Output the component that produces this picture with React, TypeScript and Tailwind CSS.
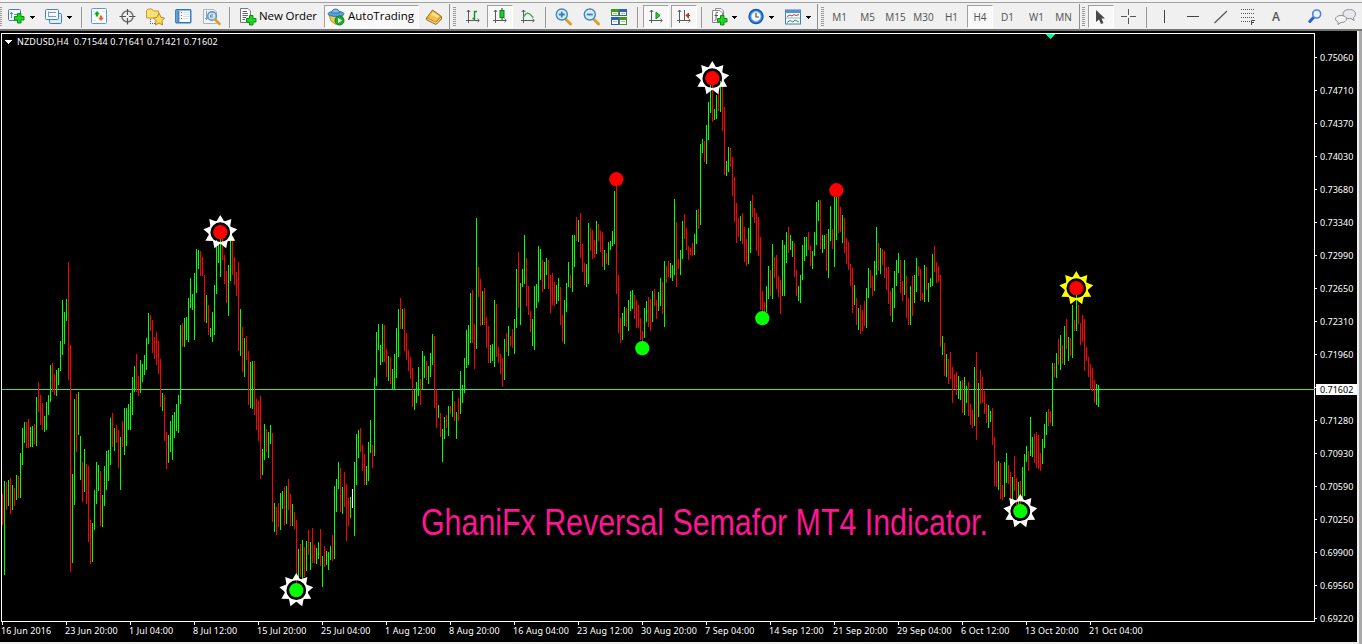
import type { ReactNode } from "react";

// One token per bar, oldest first: colour letter, high and low in chart pixels.
const BARS = `
r494-525 g481-575 r482-510 g480-506 r478-514 g485-510 r488-506 g475-500 r476-498 g453-498
g428-465 g422-443 r422-448 r419-448 g427-447 g426-447 r424-444 g397-446 r382-412 r395-425
r403-430 g416-432 g402-430 g395-415 g365-402 r363-392 r374-395 g370-396 g368-385 g341-371
g300-355 g312-344 g299-321 r262-380 r345-572 g474-563 g399-505 r394-452 g392-435 g436-480
r462-502 g449-492 r464-504 r466-542 r520-564 g523-562 g490-530 g462-504 g465-491 r471-526
g495-527 g466-506 g451-490 g450-481 g418-465 r413-447 g428-451 r425-443 r430-468 g437-490
r421-447 g408-455 g408-446 g404-430 g393-430 g377-415 g366-392 r354-392 r376-396 g360-393
g364-382 g355-375 g338-370 g313-344 r315-331 r320-353 r337-359 r332-365 r341-374 r359-407
g393-411 r395-441 r432-469 g435-463 g421-452 g415-460 g412-438 g404-431 g395-433 g325-404
r323-347 g318-347 g317-340 g298-342 g278-308 g294-310 g273-340 g249-293 g250-269 r251-276
r257-276 r275-322 g295-323 r305-335 g328-337 g312-342 g285-335 g240-294 g243-263 g239-277
r237-260 r255-284 r271-303 g265-316 g240-281 r240-275 r257-285 r272-296 r262-351 g309-356
r327-372 g338-377 r336-360 r351-405 g362-408 g361-409 r361-415 r399-430 r401-441 r396-479
g449-475 g424-460 r429-452 g432-458 g425-444 r433-522 g503-532 r507-535 r503-527 g493-530
g491-509 r487-525 g486-524 r479-510 r494-526 g504-526 r512-529 r520-583 g549-577 r544-577
g540-580 r547-577 g541-571 r530-555 g542-570 r528-563 r545-563 g548-564 g542-559 r529-566
g556-587 r546-567 g551-565 g552-570 g546-560 r535-561 g486-559 g479-512 g462-489 r468-512
g487-514 r472-507 r484-541 r498-526 g497-518 w489-508 g462-536 g434-485 g430-458 r428-452
r445-471 r454-485 g466-485 g442-481 g420-453 r445-468 g378-456 g332-386 g324-350 g345-365
g324-362 r325-362 r349-377 g356-381 r357-384 g369-389 g354-389 g328-378 g309-357 r298-329
g309-329 r308-351 r333-360 r350-371 r357-379 r368-407 g390-410 g382-403 g367-396 r379-405
g351-389 g356-378 r361-380 g366-384 g353-377 g334-365 r336-408 r389-428 g405-418 r413-437
g429-462 g417-439 r415-428 g406-436 r406-414 g391-417 r401-421 g412-439 r398-421 g371-414
g385-403 g358-393 g330-368 g325-365 g293-343 r290-343 r324-369 g218-349 r267-297 r279-326
g291-325 r288-325 r317-348 r326-363 g345-363 g344-361 g300-367 r304-357 r347-363 r354-374
r358-387 g339-380 r333-352 g326-356 r336-346 r329-348 g319-354 g269-328 r252-308 g283-325
g269-287 g235-284 r258-306 r286-315 r311-332 g319-346 g286-350 g284-308 g246-302 g249-280
r260-292 g262-289 g258-275 r260-289 r275-313 r273-305 r282-306 g285-304 g278-301 r287-325
r315-342 g300-344 g283-312 g262-287 r275-288 g235-292 g235-267 r217-241 g220-242 r213-258
r244-272 r263-285 g264-287 g223-284 r228-251 r230-259 r240-258 g221-254 r224-241 r231-252
r232-267 g250-270 r253-264 g242-265 g241-250 g231-246 g191-244 r183-294 r275-333 r318-343
g313-340 g307-326 r308-327 g300-331 g291-311 g290-309 r295-319 r300-328 r305-328 r318-340
r331-342 g308-338 g301-322 r297-327 r299-331 g291-322 r289-306 r300-319 g292-311 g278-306
r282-314 g261-327 r266-283 r261-277 g263-278 g265-281 g199-275 r222-287 r259-269 g250-275
g221-259 r214-239 r228-250 r246-260 r248-255 r243-256 g234-255 g210-244 r209-229 g144-225
g139-153 r141-162 g125-164 g102-140 g85-113 r83-122 g109-120 g95-119 r87-111 g81-112
r86-131 r107-175 g161-176 g147-172 r148-167 r157-196 r177-222 r203-243 r218-237 g216-241
r213-244 r227-262 r239-266 g228-264 g201-253 r195-217 r208-223 r213-251 r217-256 r237-310
r291-311 r302-312 g286-312 g266-299 r270-296 g244-299 r257-278 r255-289 r276-297 r280-314
g240-296 g245-296 g232-263 r227-253 g235-250 g241-257 r243-277 r270-296 g286-301 g275-303
g245-280 g237-261 g237-256 r232-250 r246-266 g251-269 g232-256 g202-245 g200-221 r200-249
g235-253 g235-249 r234-271 g229-278 g206-241 r229-249 g195-267 g195-240 r195-233 r207-232
g215-243 r218-253 r238-264 r242-270 r264-286 r268-313 g285-305 r298-325 g308-330 r305-334
r310-331 r301-326 g288-328 g268-298 r270-288 r276-296 g261-291 g227-275 r243-271 g248-274
r249-265 r251-278 r267-290 r267-304 r291-316 g288-322 g271-308 g260-286 g253-273 r260-293
r281-301 g260-295 r276-318 r298-325 g286-325 r276-316 g275-303 g258-292 r266-276 r269-301
r293-300 g265-302 r267-290 g283-302 g278-287 g254-286 r246-272 r262-283 r266-282 r275-347
g336-355 r343-376 g354-377 r359-384 r352-379 r367-403 r374-389 r372-395 g376-399 g381-400
r380-413 g377-415 g386-403 r382-416 r404-425 r410-428 g367-426 r352-440 g383-417 r370-404
r377-403 r391-414 r404-423 g405-428 g411-422 r408-445 r437-486 r462-487 g461-490 r463-499
r485-500 g462-497 g453-483 r465-484 r472-499 g477-500 r456-491 r478-505 g482-505 r481-505
g467-500 g454-496 g446-462 r451-471 g417-456 g437-457 r434-463 r432-468 r435-469 r453-471
g439-464 g424-448 g412-435 r409-426 r411-423 g363-426 r363-377 g353-378 r339-365 g335-370
r345-364 g326-365 r319-349 g337-361 r338-356 g305-358 r320-331 g295-331 r305-324 r323-345
r315-342 r319-371 r347-361 r357-377 r364-390 r368-391 r380-403 g384-405 g385-407
`
  .trim()
  .split(/\s+/)
  .map((token, i) => {
    const [high, low] = token.slice(1).split("-").map(Number);
    return { x: 2 + i * 2, high, low, kind: token[0] };
  });

const BAR_COLORS: Record<string, string> = { r: "#ff0000", g: "#00ff00", w: "#ffffff" };

const PRICES = [
  "0.75060", "0.74710", "0.74370", "0.74030", "0.73680", "0.73340", "0.72990", "0.72650", "0.72310",
  "0.71960", null, "0.71280", "0.70930", "0.70590", "0.70250", "0.69900", "0.69560", "0.69220",
];

const TIMES = [
  "16 Jun 2016", "23 Jun 20:00", "1 Jul 04:00", "8 Jul 12:00", "15 Jul 20:00", "25 Jul 04:00",
  "1 Aug 12:00", "8 Aug 20:00", "16 Aug 04:00", "23 Aug 12:00", "30 Aug 20:00", "7 Sep 04:00",
  "14 Sep 12:00", "21 Sep 20:00", "29 Sep 04:00", "6 Oct 12:00", "13 Oct 20:00", "21 Oct 04:00",
];

const SIGNALS = [
  { x: 220, y: 232, fill: "#ff0000", sun: "#ffffff" },
  { x: 296, y: 590, fill: "#00ff00", sun: "#ffffff" },
  { x: 616, y: 179, fill: "#ff0000" },
  { x: 642, y: 348, fill: "#00ff00" },
  { x: 712, y: 78, fill: "#ff0000", sun: "#ffffff" },
  { x: 762, y: 318, fill: "#00ff00" },
  { x: 836, y: 190, fill: "#ff0000" },
  { x: 1020, y: 511, fill: "#00ff00", sun: "#ffffff" },
  { x: 1076, y: 288, fill: "#ff0000", sun: "#ffff00" },
];

const RAYS = [0, 40, 80, 120, 160, 200, 240, 280, 320];

function Signal({ x, y, fill, sun }: { x: number; y: number; fill: string; sun?: string }) {
  return (
    <g transform={`translate(${x + 0.3} ${y + 0.2})`}>
      {sun && (
        <>
          <circle r="10.8" fill="none" stroke={sun} strokeWidth="1.8" />
          {RAYS.map((a) => (
            <path key={a} d="M-4.2 -10.2L0 -17.2L4.2 -10.2Z" fill={sun} transform={`rotate(${a})`} />
          ))}
        </>
      )}
      <circle r="7.1" fill={fill} />
    </g>
  );
}

function Chart() {
  return (
    <svg width="1317" height="594" viewBox="0 31 1317 594" className="block shrink-0">
      <g shapeRendering="crispEdges">
        <path d="M1 33H1315V622H1V33ZM2 34V621H1314V34Z" fill="#fff" fillRule="evenodd" />
        {PRICES.map((_, i) => (
          <rect key={i} x="1315" y={57 + i * 33} width="2" height="1" fill="#fff" />
        ))}
        {TIMES.map((_, i) => (
          <rect key={i} x={2 + i * 64} y="622" width="1" height="3" fill="#fff" />
        ))}
        <rect x="2" y="389" width="1313" height="1" fill="#21e899" />
        {BARS.map((b) => (
          <rect key={b.x} x={b.x} y={b.high} width="1" height={b.low - b.high} fill={BAR_COLORS[b.kind]} />
        ))}
        <path d="M1046 34H1055L1050.5 39Z" fill="#00fa9a" />
      </g>
      {SIGNALS.map((s) => (
        <Signal key={s.x} {...s} />
      ))}
      <text
        x="421"
        y="535"
        textLength="567"
        lengthAdjust="spacingAndGlyphs"
        fontSize="36"
        fill="#ff1493"
        className="font-['Liberation_Sans',sans-serif]"
      >
        GhaniFx Reversal Semafor MT4 Indicator.
      </text>
    </svg>
  );
}

function Icon({ w = 18, className = "", children }: { w?: number; className?: string; children: ReactNode }) {
  return (
    <svg width={w} height="18" viewBox={`0 0 ${w} 18`} fill="none" className={`block shrink-0 ${className}`}>
      {children}
    </svg>
  );
}

function Caret({ className = "" }: { className?: string }) {
  return (
    <svg width="5" height="3" viewBox="0 0 5 3" shapeRendering="crispEdges" className={`block shrink-0 ${className}`}>
      <path d="M0 0H5V1H4V2H3V3H2V2H1V1H0Z" fill="#000" />
    </svg>
  );
}

function Sep({ className = "" }: { className?: string }) {
  return <div className={`h-[21px] w-px shrink-0 bg-[#9a9a9a] ${className}`} />;
}

function Edge({ className = "" }: { className?: string }) {
  return <div className={`-mt-px h-[26px] w-px shrink-0 bg-[#8f8f8f] ${className}`} />;
}

function Grip({ className = "" }: { className?: string }) {
  return (
    <svg width="3" height="20" viewBox="0 0 3 20" shapeRendering="crispEdges" className={`block shrink-0 ${className}`}>
      {[0, 2, 4, 6, 8, 10, 12, 14, 16, 18].map((y) => (
        <rect key={y} y={y} width="3" height="1" fill="#9b9b9b" />
      ))}
    </svg>
  );
}

function Pressed({ className = "", children }: { className?: string; children: ReactNode }) {
  return (
    <div
      className={`-mt-px flex h-[23px] shrink-0 items-center border border-t-[#a0a0a0] border-r-white border-b-white border-l-[#a0a0a0] bg-[#f8f8f8] ${className}`}
    >
      {children}
    </div>
  );
}

function Axes() {
  return <path d="M3.5 2V15M1 12.5H14M1.8 4L3.5 2L5.2 4M12.5 10.8L14.3 12.5L12.5 14.2" stroke="#5a5a5a" />;
}

function Plus({ x, y }: { x: number; y: number }) {
  return (
    <path
      d="M3.5 .5H7V3.5H10V7H7V10H3.5V7H.5V3.5H3.5Z"
      transform={`translate(${x} ${y})`}
      fill="#1ed81e"
      stroke="#0a8f12"
    />
  );
}

function Period({ label, className }: { label: string; className: string }) {
  return <div className={`shrink-0 text-center text-[10px] text-[#4f4f4f] ${className}`}>{label}</div>;
}

function Toolbar() {
  return (
    <div className="h-[31px] shrink-0 border-b-2 border-[#747474] bg-[#f0f0f0] font-['Open_Sans',sans-serif]">
      <div className="h-[2px] bg-[#f4f4f4]" />
      <div className="flex h-[27px] items-center border-t border-[#a0a0a0] pt-[2px]">
        <Grip className="-ml-px" />
        <Icon className="ml-[6px]">
          <rect x=".5" y="1.5" width="12" height="11" rx="1" fill="#f3f9ff" stroke="#3f7fb8" />
          <path d="M3.5 4V10M2 5.5H5M6 6.5H9" stroke="#5b8db8" />
          <Plus x={6} y={5} />
        </Icon>
        <Caret className="ml-[4px]" />
        <Icon className="ml-[10px]">
          <rect x="4.5" y="5.5" width="12" height="10" rx="1" fill="#dcebf8" stroke="#4a80b8" />
          <rect x=".5" y="1.5" width="13" height="10" rx="1" fill="#f5faff" stroke="#4a80b8" />
          <path d="M3.5 3.5V9M3 4.5H11M3 8.5H11" stroke="#7a9cbd" />
        </Icon>
        <Caret className="ml-[4px]" />
        <Sep className="ml-[9px]" />
        <Icon className="ml-[9px]">
          <rect x=".5" y=".5" width="15" height="15" rx="1" fill="#fafdff" stroke="#5c9bd0" />
          <path d="M2 3.5H4M11 3.5H14M2 12.5H5" stroke="#d5dde5" />
          <path d="M6 3L9 6.2H7.200V8.500H4.800V6.200H3Z" fill="#18a818" />
          <path d="M8.800 7.500H11.200V9.800H13L10 13L7 9.800H8.800Z" fill="#f0602a" />
        </Icon>
        <Icon className="ml-[10px]">
          <circle cx="8.5" cy="8.500" r="5.5" stroke="#777" strokeWidth="1.5" />
          <path d="M8.5 1V7M8.5 10V16.500M.5 8.500H7M10 8.500H16.5" stroke="#555" strokeWidth="1.2" />
        </Icon>
        <Icon w={20} className="ml-[9px]">
          <path d="M.5 10V2.5L2 1H6L7.5 3H12.5V10Z" fill="#f8df78" stroke="#c99a25" />
          <path d="M4.500 11V16M4 15.500H9" stroke="#666" strokeDasharray="1 1" />
          <path d="M13 5L15 9.3L18.5 10L16 12.8L16.6 17L13 15L9.4 17L10 12.8L7.5 10L11 9.3Z" fill="#ffd75a" stroke="#b98a1a" />
        </Icon>
        <Icon className="ml-[9px]">
          <rect x=".8" y="1.800" width="15" height="13" rx="1" fill="#fff" stroke="#2f75bd" strokeWidth="1.4" />
          <rect x="1.5" y="2.500" width="3" height="12" fill="#4e8fd0" />
          <path d="M6 4.500H7M6 7.500H7M6 10.500H7" stroke="#e23b2a" />
          <path d="M8 4.500H15M8 6.500H14M8 8.500H15M8 10.500H13" stroke="#d3dff0" />
        </Icon>
        <Icon className="ml-[10px]">
          <path d="M.5 1.5H11L13.5 4V15.5H.5Z" fill="#f1f4f6" stroke="#aab4bc" />
          <path d="M3.5 3V12M2 10.5H5M6 4.5H12" stroke="#8ba4b8" />
          <circle cx="9" cy="8" r="4.3" fill="#cfe6fa" stroke="#5b8fc4" strokeWidth="1.4" />
          <path d="M9 5.5V10M7.5 7V9.5" stroke="#5f88ac" />
          <path d="M12 11.5L16.5 16" stroke="#d9a02c" strokeWidth="2.5" strokeLinecap="round" />
        </Icon>
        <Sep className="ml-[8px]" />
        <Icon className="ml-[10px]">
          <path d="M.5 .5H8L10.5 3V14.5H.5Z" fill="#fff" stroke="#777" />
          <path d="M2.5 3.5H7M2.5 5.5H8M2.5 7.5H8M2.5 9.5H6M2.5 11.5H5" stroke="#666" />
          <Plus x={6} y={7} />
        </Icon>
        <div className="-mt-[2px] ml-px w-[58px] shrink-0 text-[11.5px] tracking-[-0.1px] whitespace-nowrap text-black">
          New Order
        </div>
        <Pressed className="ml-[7px] w-[95px] pl-[2px]">
          <Icon w={19}>
            <path d="M2 7H16L14.5 13L9 16.5L4 13Z" fill="#f1c94e" stroke="#c19326" />
            <ellipse cx="9" cy="5.8" rx="8" ry="2.6" fill="#5ba4da" stroke="#2e79b3" />
            <path d="M4.5 5C4.5 -.2 12.5 -.2 12.5 5Z" fill="#7dbdea" stroke="#2e79b3" />
            <circle cx="12.5" cy="12.5" r="4.5" fill="#1daf26" stroke="#0c8418" />
            <path d="M11 10L15 12.5L11 15Z" fill="#fff" />
          </Icon>
          <div className="-mt-px ml-[2px] text-[11.5px] whitespace-nowrap text-black">AutoTrading</div>
        </Pressed>
        <Icon className="ml-[7px]">
          <path d="M.5 10L6.5 2L15.5 8.5V11L10 16.5L.5 11.8Z" fill="#c48a1e" stroke="#a26f12" />
          <path d="M1.5 9.5L6.5 3L14.5 8.5L9.8 13.8Z" fill="#f0c04c" />
          <path d="M5 6.5L7 4L13 8L11.5 10Z" fill="#ffe391" />
          <path d="M1 11L10 15.3L15 10" stroke="#f6e2ab" />
        </Icon>
        <Edge className="ml-[5px]" />
        <Grip className="ml-[3px]" />
        <Icon className="ml-[9px]" w={16}>
          <Axes />
          <path d="M9.5 3V12M7.5 10.5H9.5M9.5 3.5H12" stroke="#148a2c" strokeWidth="1.4" />
        </Icon>
        <Pressed className="ml-[6px] w-[26px] pl-[4px]">
          <Icon w={16}>
            <Axes />
            <path d="M10 0V12" stroke="#0b7d1d" strokeWidth="1.2" />
            <rect x="8" y="2.5" width="4" height="7" fill="#22c93b" stroke="#0b7d1d" />
          </Icon>
        </Pressed>
        <Icon className="ml-[7px]" w={16}>
          <Axes />
          <path d="M3 10C5 6 7 4.5 9 5.5S12 9 13.5 9.5" stroke="#3fa551" strokeWidth="1.3" />
        </Icon>
        <Sep className="ml-[9px]" />
        <Icon className="ml-[9px]">
          <path d="M11 11.5L15.5 16" stroke="#d9a02c" strokeWidth="3" strokeLinecap="round" />
          <circle cx="6.8" cy="6.5" r="5.5" fill="#d6edfb" stroke="#3f86c4" strokeWidth="1.4" />
          <path d="M6.8 3.5V9.5M3.8 6.5H9.8" stroke="#3f7fae" strokeWidth="1.8" />
        </Icon>
        <Icon className="ml-[10px]">
          <path d="M11 11.5L15.5 16" stroke="#d9a02c" strokeWidth="3" strokeLinecap="round" />
          <circle cx="6.8" cy="6.5" r="5.5" fill="#d6edfb" stroke="#3f86c4" strokeWidth="1.4" />
          <path d="M3.8 6.5H9.8" stroke="#3f7fae" strokeWidth="1.8" />
        </Icon>
        <Icon className="ml-[10px]">
          <g shapeRendering="crispEdges">
            <path d="M0 1H8V8H0ZM8 9H16V17H8Z" fill="#3f9a1c" />
            <path d="M8 1H16V8H8ZM0 9H8V17H0Z" fill="#2b5fc0" />
            <path d="M1 4H7V7H1ZM9 4H15V7H9ZM1 12H7V16H1ZM9 12H15V16H9Z" fill="#fff" />
            <path d="M2 5H6V6H2ZM10 5H14V6H10ZM2 13H6V14H2ZM10 13H14V14H10Z" fill="#9cc3a0" />
          </g>
        </Icon>
        <Sep className="ml-[8px]" />
        <Pressed className="ml-[5px] w-[26px] pl-[4px]">
          <Icon w={16}>
            <Axes />
            <path d="M8 4L12 7.5L8 11Z" fill="#30c43f" stroke="#158a25" />
          </Icon>
        </Pressed>
        <Pressed className="ml-[2px] w-[26px] pl-[4px]">
          <Icon w={16}>
            <Axes />
            <path d="M8.5 2V12" stroke="#5a5a5a" />
            <path d="M10 7.5H14M12.5 5L10 7.5L12.5 10Z" fill="#d9431a" stroke="#b93612" />
          </Icon>
        </Pressed>
        <Sep className="ml-[4px]" />
        <Icon className="ml-[10px]">
          <path d="M3.5 .5H9L11.5 3V13.5H3.5Z" fill="#fff" stroke="#888" />
          <path d="M.5 2.5H8L10.5 5V14.5H.5Z" fill="#fff" stroke="#888" />
          <path d="M6 4.5C4 3.5 4 5 4 6.5V10.5C4 12 3.5 12.5 2.5 12.5M2.5 7.5H6" stroke="#555" />
          <Plus x={5} y={7} />
        </Icon>
        <Caret className="ml-[2px]" />
        <Icon className="ml-[11px]">
          <circle cx="8" cy="8.5" r="7" fill="#2f7fd8" stroke="#1a5cae" strokeWidth="1.4" />
          <circle cx="8" cy="8.5" r="4.9" fill="#f3f9ff" stroke="#8cbdf0" />
          <path d="M8 5V9H11" stroke="#456" strokeWidth="1.2" />
        </Icon>
        <Caret className="ml-[3px]" />
        <Icon className="ml-[11px]">
          <rect x=".5" y="2" width="15" height="14" fill="#fbfdff" stroke="#3f7fb8" />
          <path d="M.5 3.5H15.5" stroke="#4f93d2" strokeWidth="3" />
          <path d="M1 10H15" stroke="#8cb4da" />
          <path d="M2 8.5L5 7L7 8L9 6.5L11 7.5L14 6.5" stroke="#b0392a" />
          <path d="M2 14.5L5 12.5L8 14L10 12L14 14" stroke="#2c9a3c" />
        </Icon>
        <Caret className="ml-[3px]" />
        <Edge className="ml-[6px]" />
        <Grip className="ml-[3px]" />
        <Period label="M1" className="ml-[3px] w-[25px]" />
        <Period label="M5" className="ml-[3px] w-[25px]" />
        <Period label="M15" className="ml-[3px] w-[25px]" />
        <Period label="M30" className="ml-[3px] w-[25px]" />
        <Period label="H1" className="ml-[3px] w-[25px]" />
        <Pressed className="ml-[3px] w-[26px]">
          <Period label="H4" className="w-[24px] pt-px" />
        </Pressed>
        <Period label="D1" className="ml-[2px] w-[25px]" />
        <Period label="W1" className="ml-[4px] w-[25px]" />
        <Period label="MN" className="ml-[2px] w-[25px]" />
        <Edge className="ml-[3px]" />
        <Grip className="ml-[2px]" />
        <Pressed className="ml-[3px] w-[26px] pl-[6px]">
          <Icon w={12}>
            <path d="M1 2V14L4 11.5L6 16L8.5 15L6.5 10.5H10Z" fill="#4a4a4a" />
          </Icon>
        </Pressed>
        <Icon w={16} className="ml-[7px]">
          <path d="M7.5 1V7M7.5 10V16M0 8.5H6M9 8.5H15" stroke="#555" />
        </Icon>
        <Sep className="ml-[9px]" />
        <Icon w={3} className="ml-[16px]">
          <path d="M1.5 2V15" stroke="#444" />
        </Icon>
        <Icon w={12} className="ml-[21px]">
          <path d="M0 8.5H12" stroke="#444" />
        </Icon>
        <Icon w={14} className="ml-[15px]">
          <path d="M.5 15L13 3" stroke="#555" strokeWidth="1.2" />
        </Icon>
        <Icon w={15} className="ml-[13px]">
          <path d="M0 1.5H14M0 5.5H14M0 9.5H14M0 13.5H9" stroke="#555" strokeDasharray="1 1" />
          <path d="M10.5 17V12.5H14M10.5 14.5H13" stroke="#444" />
        </Icon>
        <div className="ml-[13px] w-[14px] shrink-0 text-center text-[12px] font-semibold text-[#555]">A</div>
        <Icon w={15} className="ml-[25px]">
          <path d="M5.5 9.5L1.8 13.5" stroke="#2f5fc8" strokeWidth="3" strokeLinecap="round" />
          <circle cx="8.7" cy="6" r="4" fill="#eaf3ff" stroke="#4d82dc" strokeWidth="1.6" />
        </Icon>
        <Icon w={22} className="ml-[12px]">
          <path d="M14.5 1.5C18 1.5 20.5 3.3 20.5 6C20.5 7.8 19.5 9 18.5 9.7L19 12.5L16 10.5C11 11 8 9 8 6S11 1.5 14.5 1.5Z" fill="#e7e7ec" stroke="#8f8f94" />
          <path d="M6 7.5C9.3 7.5 11.5 9 11.5 11S9.3 14.5 6 14.5L3 16.5L3.2 14C1.5 13.3 .5 12.3 .5 11C.5 9 2.7 7.5 6 7.5Z" fill="#f4f4f7" stroke="#8f8f94" />
        </Icon>
      </div>
    </div>
  );
}

export default function App() {
  return (
    <div className="flex h-[644px] w-[1362px] flex-col overflow-hidden bg-[#f0f0f0]">
      <Toolbar />
      <div className="flex h-[613px]">
        <div className="relative flex h-[611px] w-[1357px] flex-col bg-black font-['Noto_Sans',sans-serif] text-[9px] leading-[11px] text-white">
          <div className="absolute top-[5px] left-[5px] flex items-center gap-[5px] tracking-[0.13px] whitespace-pre">
            <svg width="7" height="4" viewBox="0 0 7 4" shapeRendering="crispEdges">
              <path d="M0 0H7V1H6V2H5V3H4V4H3V3H2V2H1V1H0Z" fill="#fff" />
            </svg>
            <span>{"NZDUSD,H4  0.71544 0.71641 0.71421 0.71602"}</span>
          </div>
          <div className="flex h-[594px] shrink-0">
            <Chart />
            <div className="w-[40px] pt-[10px]">
              {PRICES.map((price, i) =>
                price ? (
                  <div key={i} className="flex h-[33px] items-center pl-[3px]">
                    {price}
                  </div>
                ) : (
                  <div key={i} className="h-[33px] pt-[13px]">
                    <div className="-ml-px h-[11px] bg-white pl-[4px] text-black">0.71602</div>
                  </div>
                ),
              )}
            </div>
          </div>
          <div className="flex h-[17px] shrink-0 pl-px tracking-[0.1px]">
            {TIMES.map((time) => (
              <div key={time} className="w-[64px] shrink-0 whitespace-nowrap">
                {time}
              </div>
            ))}
          </div>
        </div>
        <div className="w-[2px] bg-[#f0f0f0]" />
        <div className="w-[3px] bg-[#a9a9a9]" />
      </div>
    </div>
  );
}
